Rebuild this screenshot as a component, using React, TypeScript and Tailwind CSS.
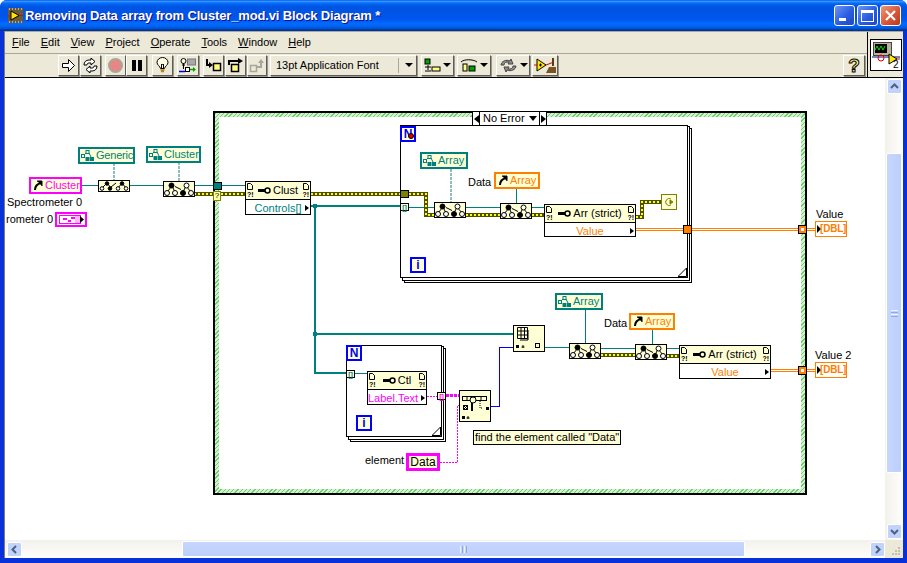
import type { ReactNode } from "react";

const Chevron = ({ d }: { d: string }) => (
  <svg width="9" height="9" viewBox="0 0 9 9" fill="none" stroke="#4d6185" strokeWidth="2">
    <path d={d} />
  </svg>
);

const ToolBtn = ({ className = "", children }: { className?: string; children?: ReactNode }) => (
  <div
    className={`h-[21px] flex items-center justify-center bg-[#ece9d8] border border-t-white border-l-white border-r-[#5f5d54] border-b-[#5f5d54] shadow-[1px_1px_0_#9a988c] ${className}`}
  >
    {children}
  </div>
);

const Caret = () => <span className="ml-[2px] w-0 h-0 border-x-[4px] border-x-transparent border-t-[4px] border-t-black" />;

const Toolbar = () => (
  <div className="h-[25px] flex items-center pl-[53px] border-t border-t-[#aca899]">
    <ToolBtn className="w-[21px]">
      <svg width="15" height="15" viewBox="0 0 15 15">
        <path d="M1.5 5.5h6v-4l6 6-6 6v-4h-6z" fill="#fff" stroke="#000" />
      </svg>
    </ToolBtn>
    <ToolBtn className="w-[21px] ml-px">
      <svg width="17" height="15" viewBox="0 0 17 15" fill="#fff" stroke="#000">
        <path d="M2 7c0-3 2-5 5-5h2V0l4 3.500-4 3.500V5H7C5.500 5 5 6 5 7z" />
        <path d="M15 8c0 3-2 5-5 5H8v2l-4-3.500L8 8v2h2c1.500 0 2-1 2-2z" />
      </svg>
    </ToolBtn>
    <ToolBtn className="w-[21px] ml-[4px]">
      <span className="w-[15px] h-[15px] rounded-full bg-[#e98585] border-2 border-[#a8a69a]" />
    </ToolBtn>
    <ToolBtn className="w-[21px] gap-[2px]">
      <span className="w-[4px] h-[11px] bg-black" />
      <span className="w-[4px] h-[11px] bg-black" />
    </ToolBtn>
    <ToolBtn className="w-[21px] ml-[5px]">
      <svg width="13" height="17" viewBox="0 0 13 17" fill="none" stroke="#000">
        <path d="M4.500 11.500C4 9 1 8 1 5.500a5.500 5 0 0 1 11 0C12 8 9 9 8.500 11.500z" fill="#fffde0" />
        <path d="M4.500 13h4M5 14.500h3" stroke="#b8860b" strokeWidth="1.500" />
        <path d="M5.500 11V7l1 1 1-1v4" />
      </svg>
    </ToolBtn>
    <ToolBtn className="w-[22px] ml-[4px]">
      <svg width="18" height="17" viewBox="0 0 18 17" fill="none">
        <circle cx="4.500" cy="4" r="2.500" stroke="#000" fill="#fffde0" />
        <path d="M4.500 6v6" stroke="#000" />
        <path d="M3 8h3" stroke="#000" />
        <rect x="8.500" y="2" width="8" height="6" fill="#a8a8a8" stroke="#777" />
        <rect x="6.500" y="10.500" width="4" height="4" fill="#fff" stroke="#000" />
        <path d="M0 14.500h6" stroke="#0000e0" strokeWidth="1.500" />
        <path d="M11 12.500h4" stroke="#00a000" strokeWidth="1.500" />
        <path d="M14 10l3 2.500-3 2.500z" fill="#00a000" />
      </svg>
    </ToolBtn>
    <ToolBtn className="w-[21px] ml-[4px]">
      <svg width="17" height="15" viewBox="0 0 17 15">
        <path d="M2 1v6h3" fill="none" stroke="#000" strokeWidth="2" />
        <path d="M4 4l4 3-4 3z" fill="#000" />
        <rect x="8.500" y="5.500" width="7" height="7" fill="#fffb80" stroke="#000" strokeWidth="1.500" />
      </svg>
    </ToolBtn>
    <ToolBtn className="w-[21px] ml-px">
      <svg width="17" height="15" viewBox="0 0 17 15">
        <path d="M2 7V3h9" fill="none" stroke="#000" strokeWidth="2" />
        <path d="M11 0l5 3-5 3z" fill="#000" />
        <rect x="4.500" y="6.500" width="7" height="7" fill="#fffb80" stroke="#000" strokeWidth="1.500" />
      </svg>
    </ToolBtn>
    <ToolBtn className="w-[20px] ml-px">
      <svg width="17" height="15" viewBox="0 0 17 15">
        <rect x="1.500" y="7.500" width="6" height="6" fill="#ece9d8" stroke="#a8a69a" strokeWidth="1.500" />
        <path d="M7 9h5V5" fill="none" stroke="#a8a69a" strokeWidth="2" />
        <path d="M9 5l3-4 3 4z" fill="#a8a69a" />
      </svg>
    </ToolBtn>
    <ToolBtn className="w-[147px] ml-[3px] justify-start pl-[5px] text-[11px] text-black">
      <span className="flex-1">13pt Application Font</span>
      <span className="h-[15px] w-[18px] border-l border-l-[#aca899] flex items-center justify-center">
        <Caret />
      </span>
    </ToolBtn>
    <ToolBtn className="w-[33px] ml-[4px]">
      <svg width="17" height="15" viewBox="0 0 17 15">
        <rect x="1" y="1" width="5" height="5" fill="#00a000" stroke="#000" />
        <path d="M1 9h6M4 7v5M1 13h6" stroke="#000" fill="none" />
        <rect x="8" y="9" width="8" height="4" fill="#fffb80" stroke="#000" />
      </svg>
      <Caret />
    </ToolBtn>
    <ToolBtn className="w-[34px] ml-[3px]">
      <svg width="18" height="15" viewBox="0 0 18 15">
        <path d="M1 4c3-3 12-3 16 0" fill="none" stroke="#000" />
        <rect x="3" y="6" width="4" height="7" fill="#fffb80" stroke="#000" />
        <rect x="9" y="8" width="6" height="5" fill="#00a000" stroke="#000" />
      </svg>
      <Caret />
    </ToolBtn>
    <ToolBtn className="w-[34px] ml-[5px]">
      <svg width="19" height="15" viewBox="0 0 19 15" fill="#8f8f8f" stroke="#444">
        <path d="M2 7a6 5 0 0 1 9-4l1-2 2 5-5 0 1-2a4 3 0 0 0-5 3z" />
        <path d="M17 8a6 5 0 0 1-9 4l-1 2-2-5 5 0-1 2a4 3 0 0 0 5-3z" />
      </svg>
      <Caret />
    </ToolBtn>
    <ToolBtn className="w-[26px] ml-[2px]">
      <svg width="22" height="17" viewBox="0 0 22 17">
        <path d="M3 2l9 6-9 6z" fill="#ffe800" stroke="#000" />
        <path d="M0 8h3M12 8l8-3" stroke="#e00000" fill="none" />
        <path d="M5 8h3M6.500 6.500v3" stroke="#000" />
        <path d="M19 1v8" stroke="#5a3a10" strokeWidth="2" />
        <path d="M12 16l3-6h7v6z" fill="#7a5320" />
      </svg>
    </ToolBtn>
    <ToolBtn className="w-[22px] ml-auto mr-[2px]">
      <span className="text-[19px] leading-none text-[#fff27a] font-bold [-webkit-text-stroke:1px_#000]">?</span>
    </ToolBtn>
  </div>
);

const TitleBar = () => (
  <div className="h-[31px] shrink-0 rounded-t-[7px] flex items-center pl-[8px] pr-[6px] bg-[linear-gradient(180deg,#0058e6_0%,#3a93ff_4%,#288eff_6%,#127dff_8%,#036ffc_10%,#0262ee_14%,#0057e5_20%,#0054e3_24%,#0055eb_56%,#005bf5_66%,#026afe_76%,#0062ef_86%,#0052d6_92%,#0040ab_94%,#003092_100%)]">
    <svg width="15" height="15" viewBox="0 0 15 15">
      <rect width="15" height="15" fill="#6b5a3a" />
      <path d="M1 1h1M4 1h1M7 1h1M10 1h1M13 1h1M1 14h1M4 14h1M7 14h1M10 14h1M13 14h1" stroke="#fff" />
      <path d="M3 3l8 4.500-8 4.500z" fill="#ffe800" stroke="#000" />
      <path d="M0 8h3M11 7.500h4" stroke="#e00000" />
    </svg>
    <span className="ml-[2px] text-[13px] font-bold text-white tracking-[-0.15px] [text-shadow:1px_1px_0_#0f1089]">
      Removing Data array from Cluster_mod.vi Block Diagram *
    </span>
    <div className="ml-auto flex gap-[2px]">
      <div className="w-[21px] h-[21px] rounded-[3px] border border-white flex items-end pl-[4px] pb-[4px] bg-[linear-gradient(135deg,#6f95f5,#2b5de0_55%,#1f46c8)]">
        <span className="w-[7px] h-[3px] bg-white" />
      </div>
      <div className="w-[21px] h-[21px] rounded-[3px] border border-white flex items-center justify-center bg-[linear-gradient(135deg,#6f95f5,#2b5de0_55%,#1f46c8)]">
        <span className="w-[13px] h-[12px] border border-white border-t-[3px]" />
      </div>
      <div className="w-[21px] h-[21px] rounded-[3px] border border-white flex items-center justify-center bg-[linear-gradient(135deg,#ea9a7c,#d9553a_55%,#b83a20)]">
        <svg width="13" height="13" viewBox="0 0 13 13" stroke="#fff" strokeWidth="2.200">
          <path d="M2 2l9 9M11 2l-9 9" />
        </svg>
      </div>
    </div>
  </div>
);

const MenuBar = () => (
  <div className="h-[21px] flex items-center gap-[11px] pl-[7px] pb-px text-[11px] text-black">
    <span><span className="underline">F</span>ile</span>
    <span><span className="underline">E</span>dit</span>
    <span><span className="underline">V</span>iew</span>
    <span><span className="underline">P</span>roject</span>
    <span><span className="underline">O</span>perate</span>
    <span><span className="underline">T</span>ools</span>
    <span><span className="underline">W</span>indow</span>
    <span><span className="underline">H</span>elp</span>
  </div>
);

const TealTree = () => (
  <svg width="14" height="11" viewBox="0 0 14 11" className="shrink-0" stroke="#007f7f" fill="none">
    <rect x="5" y="0.500" width="3" height="3" />
    <rect x="0.500" y="4.500" width="3" height="3" />
    <rect x="9.500" y="7.500" width="3" height="3" fill="#007f7f" />
    <rect x="5" y="7.500" width="3" height="3" fill="#007f7f" />
    <path d="M5 3L3 5M8 3l2 4" />
  </svg>
);

const RefArrow = () => (
  <svg width="11" height="11" viewBox="0 0 11 11" className="shrink-0" fill="none" stroke="#000" strokeWidth="2">
    <path d="M2 10c0-3 2-6 6-7" />
    <path d="M4 1h5v5" fill="#000" strokeWidth="1" />
  </svg>
);

const CastNode = ({ className }: { className: string }) => (
  <div className={`absolute border border-black bg-[#ffffd5] ${className}`}>
    <svg width="30" height="14" viewBox="0 0 30 14" fill="none" stroke="#000">
      <path d="M8 4L3 10M8 4l3 6M22 4l-3 6M22 4l5 6M11 4.500l6 3" />
      <circle cx="7.500" cy="3.500" r="2.500" fill="#000" />
      <circle cx="22.500" cy="3.500" r="2.500" fill="#fff" />
      <circle cx="3" cy="11" r="2.500" fill="#fff" />
      <circle cx="11" cy="11" r="2.500" fill="#fff" />
      <circle cx="19" cy="11" r="2.500" fill="#000" />
      <circle cx="27" cy="11" r="2.500" fill="#fff" />
    </svg>
  </div>
);

const SideMarks = () => (
  <div className="flex flex-col items-center justify-between h-full py-[1px]">
    <svg width="6" height="7" viewBox="0 0 6 7" fill="none" stroke="#000">
      <path d="M.5.500h3l2 2v4h-5z" />
    </svg>
    <span className="text-[7px] leading-[7px] font-bold text-black">?!</span>
  </div>
);

const KeyIcon = () => (
  <svg width="13" height="7" viewBox="0 0 13 7" className="shrink-0">
    <path d="M0 2h7v3H0z" fill="#000" />
    <circle cx="9.500" cy="3.500" r="2.500" fill="none" stroke="#000" strokeWidth="1.500" />
  </svg>
);

const PropNode = ({
  className,
  headClass,
  name,
  value,
  valueClass,
}: {
  className: string;
  headClass: string;
  name: string;
  value: string;
  valueClass: string;
}) => (
  <div className={`absolute border border-black flex flex-col bg-white ${className}`}>
    <div className={`flex items-center justify-between bg-[#ffffd5] border-b border-b-black px-[1px] ${headClass}`}>
      <SideMarks />
      <div className="flex items-center gap-[2px] text-[11px] text-black whitespace-nowrap">
        <KeyIcon />
        <span>{name}</span>
      </div>
      <SideMarks />
    </div>
    <div className={`flex-1 flex items-center justify-center relative text-[11px] ${valueClass}`}>
      {value}
      <span className="absolute right-[1px] top-1/2 -translate-y-1/2 w-0 h-0 border-y-[3px] border-y-transparent border-l-[4px] border-l-black" />
    </div>
  </div>
);

const Loop = ({ className, children }: { className: string; children?: ReactNode }) => (
  <div className={`absolute ${className}`}>
    <div className="absolute left-[4px] top-[3px] right-[-4px] bottom-[-5px] border border-black bg-white" />
    <div className="absolute left-[2px] top-[1px] right-[-2px] bottom-[-3px] border border-black bg-white" />
    <div className="absolute inset-0 border border-black bg-white">
      <svg width="9" height="9" viewBox="0 0 9 9" className="absolute right-0 bottom-0">
        <path d="M0 8.500L8.500 0v8.500z" fill="#fff" stroke="#000" />
      </svg>
    </div>
    {children}
  </div>
);

const LoopMark = ({ className, letter }: { className: string; letter: string }) => (
  <div
    className={`absolute w-[16px] h-[16px] border-2 border-[#0000ff] bg-[#ffffd5] flex items-center justify-center text-[12px] font-bold text-[#0000ff] leading-none ${className}`}
  >
    {letter}
  </div>
);

const ArrTunnel = ({ className }: { className: string }) => (
  <div
    className={`absolute border border-black bg-[#ffffd5] flex items-center justify-center text-[7px] font-bold leading-none text-[#007f7f] ${className}`}
  >
    []
  </div>
);

const Dbl = ({ className }: { className: string }) => (
  <div
    className={`absolute w-[32px] h-[16px] border border-[#ff8000] bg-white flex items-center pl-[1px] text-[10px] font-bold text-[#ff8000] leading-none whitespace-nowrap overflow-hidden ${className}`}
  >
    <span className="shrink-0 w-0 h-0 border-y-[4px] border-y-transparent border-l-[4px] border-l-black" />
    <span className="ml-[-1px] tracking-[-0.2px]">[DBL]</span>
  </div>
);

const Label = ({ className, children }: { className: string; children: ReactNode }) => (
  <span className={`absolute text-[11px] leading-[14px] text-black whitespace-nowrap ${className}`}>{children}</span>
);

const Wires = () => (
  <svg width="907" height="563" className="absolute left-0 top-0" fill="none" shapeRendering="crispEdges">
    {/* class drops, dashed */}
    <g stroke="#8fbcbc" strokeWidth="2" strokeDasharray="3 1">
      <path d="M114 163v17M179 162v19M451 169v33" />
    </g>
    {/* thin refs */}
    <g stroke="#007f7f">
      <path d="M82 185.500h16M130 185.500h33M194 185.500h19M222 185.500h23" />
      <path d="M409 207.500h25M466 207.500h34M532 207.500h12M516.500 189v14" />
      <path d="M355 373.500h12M545 347.500h24M601 348.500h34M667 348.500h12M585.500 310v33M652.500 329v15" />
    </g>
    {/* thick refs */}
    <g stroke="#007f7f" strokeWidth="2">
      <path d="M311 206h89M315 206v167h31M315 334h198" />
    </g>
    <circle cx="315" cy="206" r="2.500" fill="#007f7f" />
    <circle cx="315" cy="334" r="2.500" fill="#007f7f" />
    {/* error cluster */}
    <g stroke="#4f4f00" strokeWidth="4">
      <path d="M194 194h19M221 194h24M311 194h89M409 194h17v21h8M466 215h34M532 215h12M636 217h6v-15h19M601 355h34M667 356h12" />
    </g>
    <g stroke="#ffff00" strokeWidth="2" strokeDasharray="2 2">
      <path d="M194 194h19M221 194h24M311 194h89M409 194h17v21h8M466 215h34M532 215h12M636 217h6v-15h19M601 355h34M667 356h12" />
    </g>
    {/* doubles */}
    <g stroke="#ff8000" strokeWidth="3">
      <path d="M636 229.500h47M691 229.500h107M807 229.500h8M771 370.500h27M806 370.500h9" />
    </g>
    <g stroke="#fff" strokeWidth="1">
      <path d="M636 229.500h47M691 229.500h107M807 229.500h8M771 370.500h27M806 370.500h9" />
    </g>
    {/* strings */}
    <g stroke="#ff00ff" strokeDasharray="2 1">
      <path d="M427 396.500h10M440 462.500h17.500v-57.500h1.500" />
    </g>
    <g stroke="#ff00ff" strokeWidth="3" strokeDasharray="3 1">
      <path d="M446 395.500h13" />
    </g>
    <path d="M491 406.500h8.500v-59.500h13.500" stroke="#0000ff" />
  </svg>
);

const Diagram = () => (
  <div className="flex-1 relative overflow-hidden bg-white">
    <div className="absolute left-[-5px] top-[-78px] w-[907px] h-[563px] text-[11px]">
      {/* case structure */}
      <div className="absolute left-[213px] top-[111px] w-[594px] h-[384px] border-2 border-black p-[4px] bg-[repeating-linear-gradient(135deg,#6fcf6f_0,#6fcf6f_1px,#d4f2d0_1px,#d4f2d0_3px)]">
        <div className="w-full h-full bg-white" />
      </div>
      <div className="absolute left-[472px] top-[111px] w-[75px] h-[15px] flex border border-black bg-white">
        <div className="w-[7px] shrink-0 border-r border-r-black flex items-center justify-center">
          <span className="w-0 h-0 border-y-[4px] border-y-transparent border-r-[5px] border-r-black" />
        </div>
        <div className="flex-1 flex items-center pl-[3px] text-[11px] leading-none text-black whitespace-nowrap">
          No Error
          <span className="ml-[4px] w-0 h-0 border-x-[4px] border-x-transparent border-t-[5px] border-t-black" />
        </div>
        <div className="w-[7px] shrink-0 border-l border-l-black flex items-center justify-center">
          <span className="w-0 h-0 border-y-[4px] border-y-transparent border-l-[5px] border-l-black" />
        </div>
      </div>

      <Loop className="left-[400px] top-[125px] w-[288px] h-[153px]" />
      <Loop className="left-[346px] top-[345px] w-[96px] h-[92px]" />

      <Wires />

      {/* while loop */}
      <LoopMark className="left-[400px] top-[126px]" letter="N" />
      <span className="absolute left-[408px] top-[133px] w-[6px] h-[6px] rounded-full bg-[#e00000] border border-black" />
      <LoopMark className="left-[410px] top-[257px]" letter="i" />
      <div className="absolute left-[420px] top-[152px] w-[48px] h-[17px] border-2 border-[#007f7f] bg-[#ffffd5] flex items-center pl-[1px] gap-[1px] text-[#007f7f]">
        <TealTree />
        Array
      </div>
      <Label className="left-[468px] top-[175px]">Data</Label>
      <div className="absolute left-[494px] top-[172px] w-[46px] h-[17px] border-2 border-[#ff8000] bg-[#ffffd5] flex items-center pl-[2px] gap-[1px] text-[#ff8000]">
        <RefArrow />
        Array
      </div>
      <span className="absolute left-[400px] top-[190px] w-[9px] h-[8px] bg-[#7f7f00] border border-black" />
      <ArrTunnel className="left-[400px] top-[203px] w-[9px] h-[8px]" />
      <CastNode className="left-[434px] top-[202px] w-[32px] h-[16px]" />
      <CastNode className="left-[500px] top-[203px] w-[32px] h-[16px]" />
      <PropNode
        className="left-[544px] top-[204px] w-[92px] h-[33px]"
        headClass="h-[18px]"
        name="Arr (strict)"
        value="Value"
        valueClass="text-[#ff8000]"
      />
      <div className="absolute left-[661px] top-[194px] w-[16px] h-[16px] border border-[#7f7f00] bg-[#ffffd5] flex items-center justify-center">
        <svg width="10" height="10" viewBox="0 0 10 10" fill="none" stroke="#7f7f00">
          <path d="M7 2a3.500 3.500 0 1 0 0 6" />
          <path d="M6 3l3 2-3 2z" fill="#7f7f00" />
        </svg>
      </div>
      <div className="absolute left-[683px] top-[225px] w-[9px] h-[9px] border border-black bg-[#ff8000]" />

      {/* left of the structure */}
      <div className="absolute left-[78px] top-[147px] w-[57px] h-[17px] border-2 border-[#007f7f] bg-[#ffffd5] flex items-center pl-[1px] gap-[1px] text-[#007f7f] tracking-[-0.2px] whitespace-nowrap">
        <TealTree />
        Generic
      </div>
      <div className="absolute left-[146px] top-[146px] w-[55px] h-[17px] border-2 border-[#007f7f] bg-[#ffffd5] flex items-center pl-[1px] gap-[1px] text-[#007f7f]">
        <TealTree />
        Cluster
      </div>
      <div className="absolute left-[29px] top-[177px] w-[53px] h-[17px] border-2 border-[#ff00ff] bg-[#ffffd5] flex items-center pl-[2px] gap-[1px] text-[#ff00ff]">
        <RefArrow />
        Cluster
      </div>
      <div className="absolute left-[98px] top-[180px] w-[32px] h-[12px] border border-black bg-[#ffffd5]">
        <svg width="30" height="10" viewBox="0 0 30 10" fill="none" stroke="#000">
          <path d="M8 2L3 7M8 2l4 5M12 6l5-4M23 2l-4 5M23 2l4 5" />
          <circle cx="8" cy="2.500" r="1.800" fill="#000" />
          <circle cx="23" cy="2.500" r="1.800" fill="#000" />
          <circle cx="3" cy="7.500" r="1.800" fill="#fff" />
          <circle cx="11" cy="7.500" r="1.800" fill="#000" />
          <circle cx="19" cy="7.500" r="1.800" fill="#fff" />
          <circle cx="27" cy="7.500" r="1.800" fill="#fff" />
        </svg>
      </div>
      <CastNode className="left-[163px] top-[181px] w-[32px] h-[16px]" />
      <Label className="left-[7px] top-[195px]">Spectrometer 0</Label>
      <Label className="left-[6px] top-[212px]">rometer 0</Label>
      <div className="absolute left-[55px] top-[212px] w-[32px] h-[15px] border-2 border-[#ff00ff] bg-white flex items-center justify-end pr-[1px]">
        <svg width="25" height="9" viewBox="0 0 25 9" className="shrink-0">
          <rect x="0.500" y="0.500" width="21" height="8" fill="#fff" stroke="#ff00ff" />
          <rect x="16" y="1" width="5" height="7" fill="#ffb0ff" />
          <path d="M4 3h4v2H4zM9 5h3v2H9zM12 2h4v2h-4z" fill="#ff00ff" />
          <path d="M21 1l4 3.500-4 3.500z" fill="#000" />
        </svg>
      </div>
      <span className="absolute left-[213px] top-[182px] w-[9px] h-[8px] bg-[#007f7f] border border-black" />
      <span className="absolute left-[213px] top-[191px] w-[8px] h-[10px] bg-[#ffffa0] border border-[#7f7f00] text-[8px] leading-[8px] text-center text-black">?</span>
      <PropNode
        className="left-[245px] top-[181px] w-[66px] h-[34px]"
        headClass="h-[19px]"
        name="Clust"
        value="Controls[]"
        valueClass="text-[#007f7f]"
      />

      {/* for loop */}
      <LoopMark className="left-[346px] top-[345px]" letter="N" />
      <LoopMark className="left-[356px] top-[415px]" letter="i" />
      <ArrTunnel className="left-[346px] top-[370px] w-[9px] h-[8px]" />
      <PropNode
        className="left-[367px] top-[371px] w-[60px] h-[34px]"
        headClass="h-[19px]"
        name="Ctl"
        value="Label.Text"
        valueClass="text-[#ff00ff] justify-start"
      />
      <div className="absolute left-[437px] top-[392px] w-[9px] h-[8px] border border-black bg-[#ffffd5] flex items-center justify-center text-[7px] font-bold leading-none text-[#ff00ff]">
        []
      </div>

      {/* search node */}
      <div className="absolute left-[459px] top-[390px] w-[32px] h-[32px] border border-black bg-[#ffffd5]">
        <svg width="30" height="30" viewBox="0 0 30 30" fill="none" stroke="#000">
          <rect x="2.500" y="5.500" width="24" height="4" />
          <path d="M7 5v4M11 5v4M15 5v4M21 5v4" />
          <circle cx="13" cy="9" r="3" fill="#ffffd5" />
          <path d="M12 12v8" strokeWidth="2" />
          <rect x="3.500" y="14.500" width="4" height="4" />
          <path d="M4 15l3 3M7 15l-3 3" />
          <path d="M20 10v7h3" strokeDasharray="1 1" />
          <rect x="26" y="16" width="3" height="3" fill="#000" stroke="none" />
          <rect x="2" y="25" width="3" height="3" fill="#000" stroke="none" />
          <path d="M8 25v3M6.500 27h3" />
        </svg>
      </div>
      <div className="absolute left-[473px] top-[430px] w-[148px] h-[15px] border border-black bg-[#ffffd5] pl-[1px] flex items-center text-[11px] leading-none text-black whitespace-nowrap">
        find the element called "Data"
      </div>
      <Label className="left-[365px] top-[453px]">element</Label>
      <div className="absolute left-[406px] top-[453px] w-[34px] h-[18px] border-[3px] border-[#ff00ff] bg-[#ffffd5] flex items-center justify-center text-[12px] leading-none text-black">
        Data
      </div>

      {/* build node */}
      <div className="absolute left-[513px] top-[325px] w-[32px] h-[27px] border border-black bg-[#ffffd5]">
        <svg width="30" height="25" viewBox="0 0 30 25" fill="none" stroke="#000">
          <path d="M3.500 1.500h10v11h-10zM3.500 5h10M3.500 9h10M7 1.500v11M10.500 1.500v11M14 4v10H6" />
          <rect x="2" y="19" width="3" height="3" fill="#000" stroke="none" />
          <path d="M9 19v3M7.500 21h3" />
          <rect x="21.500" y="17.500" width="4" height="4" />
        </svg>
      </div>

      {/* lower row */}
      <div className="absolute left-[555px] top-[293px] w-[48px] h-[17px] border-2 border-[#007f7f] bg-[#ffffd5] flex items-center pl-[1px] gap-[1px] text-[#007f7f]">
        <TealTree />
        Array
      </div>
      <Label className="left-[604px] top-[316px]">Data</Label>
      <div className="absolute left-[629px] top-[313px] w-[46px] h-[17px] border-2 border-[#ff8000] bg-[#ffffd5] flex items-center pl-[2px] gap-[1px] text-[#ff8000]">
        <RefArrow />
        Array
      </div>
      <CastNode className="left-[569px] top-[343px] w-[32px] h-[16px]" />
      <CastNode className="left-[635px] top-[344px] w-[32px] h-[16px]" />
      <PropNode
        className="left-[679px] top-[345px] w-[92px] h-[34px]"
        headClass="h-[19px]"
        name="Arr (strict)"
        value="Value"
        valueClass="text-[#ff8000]"
      />

      {/* outputs */}
      <span className="absolute left-[798px] top-[225px] w-[9px] h-[9px] border border-black bg-[#ff8000] flex items-center justify-center">
        <span className="w-[3px] h-[3px] bg-white" />
      </span>
      <span className="absolute left-[798px] top-[366px] w-[9px] h-[9px] border border-black bg-[#ff8000] flex items-center justify-center">
        <span className="w-[3px] h-[3px] bg-white" />
      </span>
      <Label className="left-[816px] top-[207px]">Value</Label>
      <Dbl className="left-[815px] top-[221px]" />
      <Label className="left-[815px] top-[348px]">Value 2</Label>
      <Dbl className="left-[815px] top-[362px]" />
    </div>
  </div>
);

const VScroll = () => (
  <div className="w-[18px] shrink-0 flex flex-col items-center py-px bg-[linear-gradient(90deg,#f3f1ec,#fefefb)]">
    <div className="w-[15px] h-[15px] rounded-[2px] border border-white bg-[#c1d3fb] flex items-center justify-center shrink-0">
      <Chevron d="M1 6l3.500-3.500L8 6" />
    </div>
    <div className="w-[16px] h-[320px] mt-[59px] rounded-[2px] border border-white bg-[linear-gradient(90deg,#c6d6fd,#bccffb)] flex flex-col items-center justify-center gap-px">
      <span className="w-[7px] h-px bg-[#eef3ff]" />
      <span className="w-[7px] h-px bg-[#8aa8ec]" />
      <span className="w-[7px] h-px bg-[#eef3ff]" />
      <span className="w-[7px] h-px bg-[#8aa8ec]" />
    </div>
    <div className="w-[15px] h-[15px] mt-auto rounded-[2px] border border-white bg-[#c1d3fb] flex items-center justify-center shrink-0">
      <Chevron d="M1 3l3.500 3.500L8 3" />
    </div>
  </div>
);

const HScroll = () => (
  <div className="h-[18px] shrink-0 flex items-center bg-[linear-gradient(180deg,#f3f1ec,#fefefb)]">
    <div className="ml-[2px] w-[15px] h-[15px] rounded-[2px] border border-white bg-[#c1d3fb] flex items-center justify-center shrink-0">
      <Chevron d="M6 1L2.500 4.500 6 8" />
    </div>
    <div className="ml-[160px] w-[563px] h-[16px] rounded-[2px] border border-white bg-[linear-gradient(180deg,#c6d6fd,#bccffb)] flex items-center justify-center gap-px">
      <span className="w-px h-[7px] bg-[#eef3ff]" />
      <span className="w-px h-[7px] bg-[#8aa8ec]" />
      <span className="w-px h-[7px] bg-[#eef3ff]" />
      <span className="w-px h-[7px] bg-[#8aa8ec]" />
    </div>
    <div className="ml-auto w-[15px] h-[15px] rounded-[2px] border border-white bg-[#c1d3fb] flex items-center justify-center shrink-0">
      <Chevron d="M3 1l3.500 3.500L3 8" />
    </div>
    <div className="w-[18px] h-full bg-[#ece9d8] flex items-end justify-end pb-[2px] pr-[2px] shrink-0">
      <svg width="10" height="10" viewBox="0 0 10 10" fill="#c2bfae">
        <path d="M7 1h2v2H7zM4 4h2v2H4zM7 4h2v2H7zM1 7h2v2H1zM4 7h2v2H4zM7 7h2v2H7z" />
      </svg>
    </div>
  </div>
);

export default function App() {
  return (
    <div className="w-[907px] h-[563px] bg-white overflow-hidden font-['Liberation_Sans',sans-serif]">
      <div className="w-full h-full flex flex-col rounded-t-[7px] bg-[#0831d9]">
        <TitleBar />
        <div className="flex-1 min-h-0 flex flex-col mx-[4px] mb-[5px] bg-[#ece9d8] border-l border-l-[#7f7d72]">
          <div className="h-[47px] shrink-0 flex border-t border-t-[#aca899] border-b border-b-black">
            <div className="flex-1 flex flex-col min-w-0">
              <MenuBar />
              <Toolbar />
            </div>
            <div className="w-[36px] shrink-0 border-l border-l-black flex items-center justify-center">
              <div className="w-[32px] h-[32px] bg-white border border-black relative">
                <svg width="30" height="30" viewBox="0 0 30 30">
                  <rect x="2.500" y="2.500" width="18" height="13" fill="#b8b49c" stroke="#444" />
                  <rect x="4" y="4" width="12" height="9" fill="#000" />
                  <path d="M4 10l2-4 2 4 2-4 2 4 2-4" fill="none" stroke="#00e000" />
                  <path d="M1 17h28" stroke="#000080" />
                  <circle cx="10" cy="18" r="3" fill="none" stroke="#e00000" />
                  <path d="M18 14l8 5-8 5z" fill="#ffe800" stroke="#000" />
                  <path d="M26 19h3" stroke="#e00000" />
                </svg>
                <span className="absolute right-[2px] bottom-0 text-[10px] leading-[11px] text-black">2</span>
              </div>
            </div>
          </div>
          <div className="flex-1 min-h-0 flex">
            <Diagram />
            <VScroll />
          </div>
          <HScroll />
        </div>
      </div>
    </div>
  );
}
